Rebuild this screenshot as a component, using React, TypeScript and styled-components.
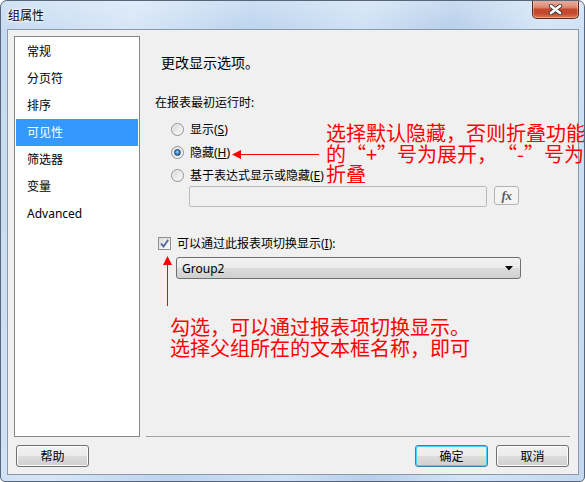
import styled, { createGlobalStyle } from 'styled-components';

const GlobalStyle = createGlobalStyle`
  html, body {
    margin: 0;
    padding: 0;
    background: #ffffff;
    overflow: hidden;
  }
  body {
    font-family: "Noto Sans", "Noto Sans CJK SC", sans-serif;
    font-size: 12px;
    color: #000;
  }
`;

const NAV_ITEMS = ['常规', '分页符', '排序', '可见性', '筛选器', '变量', 'Advanced'];

/* 组属性 对话框 - 可见性页 */
const App: React.FC = (): JSX.Element => {
  return (
    <>
      <GlobalStyle />
      <Window>
        <TitleBar>
          <Title>组属性</Title>
          <CloseButton aria-label="关闭">
            <svg width="15" height="11" viewBox="0 0 15 11">
              <path d="M3 2 L12 9 M12 2 L3 9" stroke="#3b3b3b" strokeWidth="4.4" strokeLinecap="round" />
              <path d="M3 2 L12 9 M12 2 L3 9" stroke="#ffffff" strokeWidth="2.6" strokeLinecap="round" />
            </svg>
          </CloseButton>
        </TitleBar>

        <Body>
          <Main>
            <SideList>
              {NAV_ITEMS.map((item) => (
                <SideItem key={item} $active={item === '可见性'}>
                  {item}
                </SideItem>
              ))}
            </SideList>

            <Panel>
              <Heading>更改显示选项。</Heading>
              <Prompt>在报表最初运行时:</Prompt>

              <RadioGroup>
                <RadioRow>
                  <Radio />
                  <span>
                    显示(<u>S</u>)
                  </span>
                </RadioRow>
                <RadioRow>
                  <Radio $checked />
                  <span>
                    隐藏(<u>H</u>)
                  </span>
                </RadioRow>
                <RadioRow>
                  <Radio />
                  <span>
                    基于表达式显示或隐藏(<u>E</u>)
                  </span>
                </RadioRow>
              </RadioGroup>

              <ExprRow>
                <ExprInput />
                <FxButton>fx</FxButton>
              </ExprRow>

              <ToggleRow>
                <CheckBox>
                  <svg width="11" height="11" viewBox="0 0 11 11">
                    <path d="M2 5.5 L4.5 8.6 L9.2 1.8" fill="none" stroke="#51649f" strokeWidth="1.8" />
                  </svg>
                </CheckBox>
                <span>
                  可以通过此报表项切换显示(<u>I</u>):
                </span>
              </ToggleRow>

              <Select>
                <span>Group2</span>
                <svg width="8" height="5" viewBox="0 0 8 5">
                  <polygon points="0,0 8,0 4,4.5" fill="#000" />
                </svg>
              </Select>
            </Panel>
          </Main>

          <Footer>
            <DialogButton>帮助</DialogButton>
            <Spacer />
            <DialogButton $primary>确定</DialogButton>
            <DialogButton>取消</DialogButton>
          </Footer>
        </Body>

        {/* 红色批注 */}
        <Note $top={122} $left={325} $lineHeight={20.5}>
          选择默认隐藏，否则折叠功能
          <br />
          的<Quote>“</Quote>+<Quote>”</Quote>号为展开，<Quote>“</Quote>-<Quote>”</Quote>号为
          <br />
          折叠
        </Note>
        <ArrowLeft width="90" height="11" viewBox="0 0 90 11">
          <polygon points="1,5.5 10,1 10,10" fill="#ff0000" />
          <line x1="9" y1="5.5" x2="88" y2="5.5" stroke="#ff0000" strokeWidth="1" />
        </ArrowLeft>
        <ArrowUp width="11" height="52" viewBox="0 0 11 52">
          <polygon points="5.5,1 1,10 10,10" fill="#ff0000" />
          <line x1="5.5" y1="9" x2="5.5" y2="51" stroke="#ff0000" strokeWidth="1" />
        </ArrowUp>
        <Note $top={315} $left={169} $lineHeight={21}>
          勾选，可以通过报表项切换显示。
          <br />
          选择父组所在的文本框名称，即可
        </Note>
      </Window>
    </>
  );
};

export default App;

const Window = styled.div`
  position: relative;
  width: 585px;
  height: 482px;
  box-sizing: border-box;
  border: 1px solid #56667c;
  border-radius: 7px 7px 5px 5px;
  display: flex;
  flex-direction: column;
  overflow: hidden;
  background:
    linear-gradient(180deg, rgba(255, 255, 255, 0.25) 0%, rgba(255, 255, 255, 0) 30px),
    linear-gradient(
      100deg,
      #c4d9f0 0%,
      #d6e6f7 20%,
      #bcd4ee 38%,
      #cfe1f5 55%,
      #b7cfea 68%,
      #d4e5f7 82%,
      #c3d8ef 100%
    );
`;

const TitleBar = styled.div`
  height: 28px;
  display: flex;
  align-items: flex-start;
  justify-content: space-between;
`;

const Title = styled.span`
  margin: 6px 0 0 7px;
  font-family: "Noto Sans CJK SC", sans-serif;
  font-size: 12px;
  line-height: 16px;
  color: #000;
  text-shadow: 0 0 5px #fff, 0 0 3px #fff, 0 0 2px #fff;
`;

const CloseButton = styled.div`
  width: 47px;
  height: 19px;
  margin: -1px 5px 0 0;
  box-sizing: border-box;
  border: 1px solid #62261b;
  border-top: none;
  border-radius: 0 0 5px 5px;
  display: flex;
  align-items: center;
  justify-content: center;
  background: linear-gradient(
    180deg,
    #eab3a4 0%,
    #dd8b74 40%,
    #c5472d 52%,
    #c24a2f 75%,
    #de7a55 100%
  );
  box-shadow: inset 0 0 0 1px rgba(255, 220, 200, 0.45);
`;

const Body = styled.div`
  flex: 1;
  margin: 0 5px 6px 6px;
  display: flex;
  flex-direction: column;
  background: #f0f0f0;
  border: 1px solid #8d99a8;
`;

const Main = styled.div`
  flex: 1;
  display: flex;
  gap: 6px;
  padding: 6px 8px 0 6px;
  min-height: 0;
`;

const SideList = styled.ul`
  width: 126px;
  box-sizing: border-box;
  margin: 0;
  padding: 1px;
  list-style: none;
  background: #ffffff;
  border: 1px solid #828790;
`;

const SideItem = styled.li<{ $active?: boolean }>`
  height: 27px;
  line-height: 27px;
  padding-left: 11px;
  font-size: 12px;
  color: ${({ $active }) => ($active ? '#ffffff' : '#000000')};
  background: ${({ $active }) => ($active ? '#3399ff' : 'transparent')};
`;

const Panel = styled.section`
  flex: 1;
  display: flex;
  flex-direction: column;
  box-sizing: border-box;
  border-bottom: 1px solid #a0a0a0;
`;

const Heading = styled.h2`
  margin: 17px 0 0 15px;
  font-size: 14px;
  font-weight: 400;
  line-height: 20px;
`;

const Prompt = styled.p`
  margin: 22px 0 0 9px;
  line-height: 16px;
`;

const RadioGroup = styled.div`
  display: flex;
  flex-direction: column;
  gap: 1px;
  margin: 7px 0 0 25px;
`;

const RadioRow = styled.label`
  height: 22px;
  display: flex;
  align-items: center;
  gap: 6px;
`;

const Radio = styled.span<{ $checked?: boolean }>`
  position: relative;
  width: 13px;
  height: 13px;
  box-sizing: border-box;
  border-radius: 50%;
  border: 1px solid #8e8f8f;
  background: linear-gradient(135deg, #d4d4d4 0%, #ececec 55%, #fbfbfb 100%);
  box-shadow: inset 0 0 0 1px #f4f4f4;

  &::after {
    content: '';
    display: ${({ $checked }) => ($checked ? 'block' : 'none')};
    position: absolute;
    left: 2px;
    top: 2px;
    width: 7px;
    height: 7px;
    box-sizing: border-box;
    border-radius: 50%;
    border: 1px solid #274a6d;
    background: radial-gradient(circle at 45% 40%, #b5dcfa 0%, #3b89cf 45%, #14467d 100%);
  }
`;

const ExprRow = styled.div`
  display: flex;
  align-items: flex-start;
  gap: 7px;
  margin-left: 43px;
`;

const ExprInput = styled.div`
  width: 298px;
  height: 21px;
  box-sizing: border-box;
  border: 1px solid #b9b9b9;
  border-radius: 2px;
  background: #f0f0f0;
`;

const FxButton = styled.div`
  width: 25px;
  height: 19px;
  box-sizing: border-box;
  border: 1px solid #b3b3b3;
  border-radius: 3px;
  background: #f4f4f4;
  display: flex;
  align-items: center;
  justify-content: center;
  font-family: "Liberation Serif", serif;
  font-style: italic;
  font-weight: 700;
  font-size: 13px;
  color: #5c5c5c;
  letter-spacing: -0.5px;
`;

const ToggleRow = styled.label`
  height: 16px;
  display: flex;
  align-items: center;
  gap: 6px;
  margin: 28px 0 0 12px;
`;

const CheckBox = styled.span`
  width: 13px;
  height: 13px;
  box-sizing: border-box;
  border: 1px solid #8e8f8f;
  background: linear-gradient(135deg, #dadada 0%, #eeeeee 55%, #fbfbfb 100%);
  display: flex;
  align-items: center;
  justify-content: center;
`;

const Select = styled.div`
  width: 345px;
  height: 22px;
  box-sizing: border-box;
  margin: 6px 0 0 30px;
  padding: 0 7px 0 5px;
  border: 1px solid #707070;
  border-radius: 3px;
  display: flex;
  align-items: center;
  justify-content: space-between;
  background: linear-gradient(180deg, #f2f2f2 0%, #ebebeb 50%, #dddddd 51%, #cfcfcf 100%);
  font-size: 12px;
`;

const Footer = styled.div`
  height: 37px;
  box-sizing: border-box;
  display: flex;
  align-items: flex-start;
  gap: 8px;
  padding: 8px 9px 0 8px;
`;

const Spacer = styled.div`
  flex: 1;
`;

const DialogButton = styled.button<{ $primary?: boolean }>`
  width: 73px;
  height: 22px;
  box-sizing: border-box;
  padding: 0;
  border: 1px solid ${({ $primary }) => ($primary ? '#3c7fb1' : '#707070')};
  border-radius: 3px;
  background: linear-gradient(180deg, #f2f2f2 0%, #ebebeb 50%, #dddddd 51%, #cfcfcf 100%);
  box-shadow: inset 0 0 0 1px ${({ $primary }) => ($primary ? '#48d1fe' : '#fcfcfc')};
  font-family: "Noto Sans CJK SC", sans-serif;
  font-size: 12px;
  line-height: 20px;
  color: #000;
`;

const Note = styled.div<{ $top: number; $left: number; $lineHeight: number }>`
  position: absolute;
  top: ${({ $top }) => $top}px;
  left: ${({ $left }) => $left}px;
  font-family: "Noto Sans CJK SC", sans-serif;
  font-size: 20px;
  line-height: ${({ $lineHeight }) => $lineHeight}px;
  color: #ff0000;
  white-space: nowrap;
  pointer-events: none;
`;

/* 全角引号 */
const Quote = styled.span`
  display: inline-block;
  width: 1em;
  text-align: center;
`;

const ArrowLeft = styled.svg`
  position: absolute;
  left: 230px;
  top: 148px;
`;

const ArrowUp = styled.svg`
  position: absolute;
  left: 161px;
  top: 254px;
`;
